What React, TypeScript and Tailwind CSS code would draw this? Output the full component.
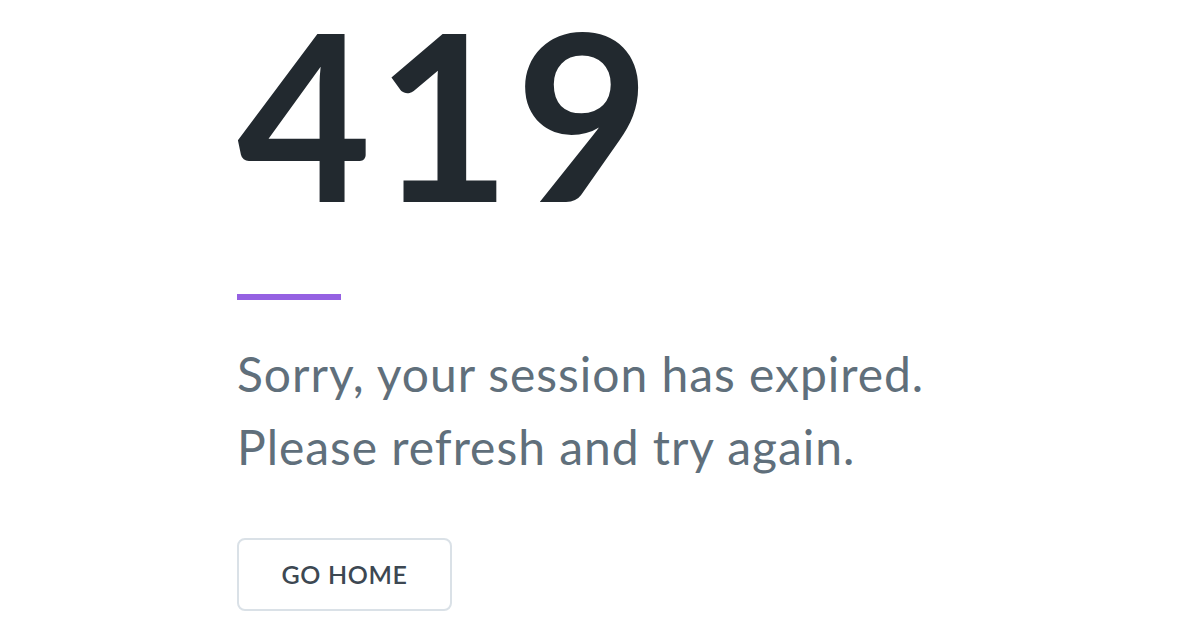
export default function App() {
	return (
		<div className="h-[628px] w-[1200px] overflow-hidden bg-white font-['Lato',sans-serif]">
			<div className="flex flex-col items-start pl-[237px]">
				{/* Error code */}
				<div className="mt-[12px] text-[232px] leading-[200px] font-bold tracking-[0.02em] text-[#22292f]">419</div>

				{/* Accent bar */}
				<div className="mt-[82px] h-[6px] w-[104px] bg-[#9561e2]" />

				{/* Message */}
				<p className="mt-[37px] text-[48px] leading-[73px] font-normal tracking-[0.02em] text-[#606f7b]">
					Sorry, your session has expired.
					<br />
					Please refresh and try again.
				</p>

				{/* Action */}
				<button className="mt-[55px] flex h-[73px] w-[215px] items-center justify-center rounded-[8px] border-2 border-[#dae1e7] bg-white text-[25px] font-semibold tracking-wide text-[#3d4852]">
					GO HOME
				</button>
			</div>
		</div>
	);
}
